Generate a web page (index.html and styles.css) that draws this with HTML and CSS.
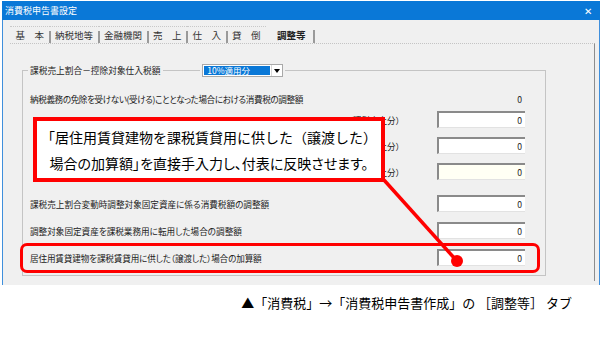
FILE: index.html
```html
<!DOCTYPE html>
<html lang="ja">
<head>
    <meta charset="UTF-8">
    <title>消費税申告書設定</title>
    <link rel="stylesheet" href="styles.css">
</head>
<body>
    <div class="window">
        <div class="titlebar">
            <span class="title">消費税申告書設定</span>
            <span class="close">✕</span>
        </div>
        <div class="frame">
            <div class="tabs">
                <span class="tab">基　本</span>
                <span class="tab">納税地等</span>
                <span class="tab">金融機関</span>
                <span class="tab">売　上</span>
                <span class="tab">仕　入</span>
                <span class="tab">貸　倒</span>
                <span class="tab active">調整等</span>
            </div>
            <div class="panel">
                <fieldset class="group">
                    <legend class="group-head">
                        <span class="group-title">課税売上割合－控除対象仕入税額</span>
                        <span class="group-rule"></span>
                        <span class="select">
                            <span class="select-value">10%適用分</span>
                            <span class="select-arrow"></span>
                        </span>
                    </legend>

                    <div class="row">
                        <span class="row-label row-label--dense">納税義務の免除を受けない(受ける)こととなった場合における消費税の調整額</span>
                        <span class="amount">0</span>
                    </div>
                    <div class="row row--close">
                        <span class="row-label row-sub">（課税売上分）</span>
                        <span class="amount field">0</span>
                    </div>
                    <div class="row">
                        <span class="row-label row-sub">（非課税売上分）</span>
                        <span class="amount field">0</span>
                    </div>
                    <div class="row">
                        <span class="row-label row-sub">（輸出売上分）</span>
                        <span class="amount field field--note">0</span>
                    </div>
                    <div class="row row--section">
                        <span class="row-label">課税売上割合変動時調整対象固定資産に係る消費税額の調整額</span>
                        <span class="amount field">0</span>
                    </div>
                    <div class="row row--wide">
                        <span class="row-label">調整対象固定資産を課税業務用に転用した場合の調整額</span>
                        <span class="amount field">0</span>
                    </div>
                    <div class="row row--wide">
                        <span class="row-label row-label--snug">居住用賃貸建物を課税賃貸用に供した（譲渡した）場合の加算額</span>
                        <span class="amount field">0</span>
                    </div>
                </fieldset>
            </div>
        </div>
    </div>

    <p class="caption">▲「消費税」→「消費税申告書作成」の ［調整等］ タブ</p>

    <!-- annotation layer -->
    <div class="highlight"></div>
    <svg class="pointer" viewBox="0 0 604 337">
        <line x1="384" y1="180" x2="456" y2="260" stroke="#ff0000" stroke-width="3.5"/>
        <circle cx="457" cy="261" r="6" fill="#ff0000"/>
    </svg>
    <div class="callout">
        <span>「居住用賃貸建物を課税賃貸用に供した（譲渡した）</span>
        <span class="callout-tight">場合の加算額」を直接手入力し、付表に反映させます。</span>
    </div>
</body>
</html>
```

FILE: styles.css
```css
* {
    box-sizing: border-box;
}

body {
    margin: 0;
    width: 604px;
    height: 337px;
    position: relative;
    background: #ffffff;
    font-family: "Noto Sans CJK JP", sans-serif;
    color: #222;
    overflow: hidden;
}

.window {
    width: 598px;
    margin: 1px 0 0 2px;
}

.titlebar {
    height: 19px;
    background: #0a78d7;
    color: #ffffff;
    display: flex;
    align-items: center;
    justify-content: space-between;
    padding: 0 8px 0 3px;
    font-size: 9px;
}

.close {
    font-size: 10px;
}

.frame {
    height: 265px;
    background: #f0f0f0;
    border-left: 1px solid #3f8fdc;
    border-right: 1px solid #3f8fdc;
    padding: 6px 4px 0 7px;
}

/* tab strip */
.tabs {
    display: flex;
    height: 17px;
}

.tab {
    display: flex;
    align-items: center;
    padding: 0 5.5px;
    font-size: 9.5px;
    color: #333;
    border-top: 1px dotted #c8c8c8;
    position: relative;
}

.tab::after {
    content: '';
    position: absolute;
    right: -1px;
    top: 4px;
    bottom: 0;
    width: 2px;
    background: #9a9a9a;
}

.tab:nth-child(6)::after {
    display: none;
}

.tab.active {
    padding: 0 8px 0 11px;
    border-top: none;
    font-weight: bold;
    color: #222;
}

.panel {
    height: 238px;
    border-top: 1px dotted #c4c4c4;
    border-right: 1px solid #8d8d8d;
    padding-left: 12px;
}

/* group box */
.group {
    width: 524px;
    margin: 20px 0 0;
    padding: 13px 20px 9px 7px;
    border: 1px solid #c4c4c4;
    min-width: 0;
}

.group-head {
    display: flex;
    align-items: center;
    height: 13px;
    padding: 0 2px;
    margin-left: -2px;
}

.group-title {
    font-size: 8.7px;
}

.group-rule {
    width: 37px;
    height: 1px;
    background: #c4c4c4;
    margin: 0 2px 0 3px;
}

.select {
    display: flex;
    width: 81px;
    height: 13px;
    border: 1px solid #a9a9a9;
    background: #ffffff;
}

.select-value {
    flex: 1;
    margin: 1px;
    padding-left: 3px;
    background: #0a78d7;
    color: #ffffff;
    font-size: 8.5px;
    line-height: 9px;
}

.select-arrow {
    width: 11px;
    display: flex;
    align-items: center;
    justify-content: center;
    border-left: 1px solid #d8d8d8;
}

.select-arrow::before {
    content: '';
    border-left: 3px solid transparent;
    border-right: 3px solid transparent;
    border-top: 4px solid #000;
}

/* rows */
.row {
    display: flex;
    align-items: center;
    height: 17px;
    margin-top: 9px;
    font-size: 8.6px;
    font-feature-settings: "palt";
}

.row:first-of-type {
    margin-top: 0;
}

.row--close {
    margin-top: 4px;
}

.row--section {
    margin-top: 15px;
}

.row--wide {
    margin-top: 10px;
}

.row-label {
    flex: 1;
    white-space: nowrap;
}

.row-label--dense {
    letter-spacing: -0.4px;
}

.row-label--snug {
    letter-spacing: -0.15px;
}

.row-sub {
    text-align: right;
    padding-right: 37px;
}

.amount {
    width: 88px;
    height: 17px;
    display: flex;
    align-items: center;
    justify-content: flex-end;
    padding-right: 3px;
}

.field {
    background: #ffffff;
    border-top: 2px solid #8a8a8a;
    border-left: 2px solid #8a8a8a;
    border-bottom: 1px solid #e2e2e2;
}

.field--note {
    background: #fffff4;
}

.caption {
    margin: 9px 0 0;
    padding-right: 32px;
    text-align: right;
    font-size: 13px;
    line-height: 18px;
    color: #000;
}

/* annotations */
.highlight {
    position: absolute;
    left: 20px;
    top: 243px;
    width: 520px;
    height: 30px;
    border: 3px solid #ff0000;
    border-radius: 7px;
}

.pointer {
    position: absolute;
    left: 0;
    top: 0;
    width: 604px;
    height: 337px;
    pointer-events: none;
}

.callout {
    position: absolute;
    left: 33px;
    top: 117px;
    width: 352px;
    height: 65px;
    border: 4px solid #ff0000;
    background: #ffffff;
    display: flex;
    flex-direction: column;
    align-items: center;
    justify-content: center;
    font-size: 14px;
    line-height: 26px;
    white-space: nowrap;
    color: #000;
}

.callout-tight {
    font-feature-settings: "palt";
}
```
